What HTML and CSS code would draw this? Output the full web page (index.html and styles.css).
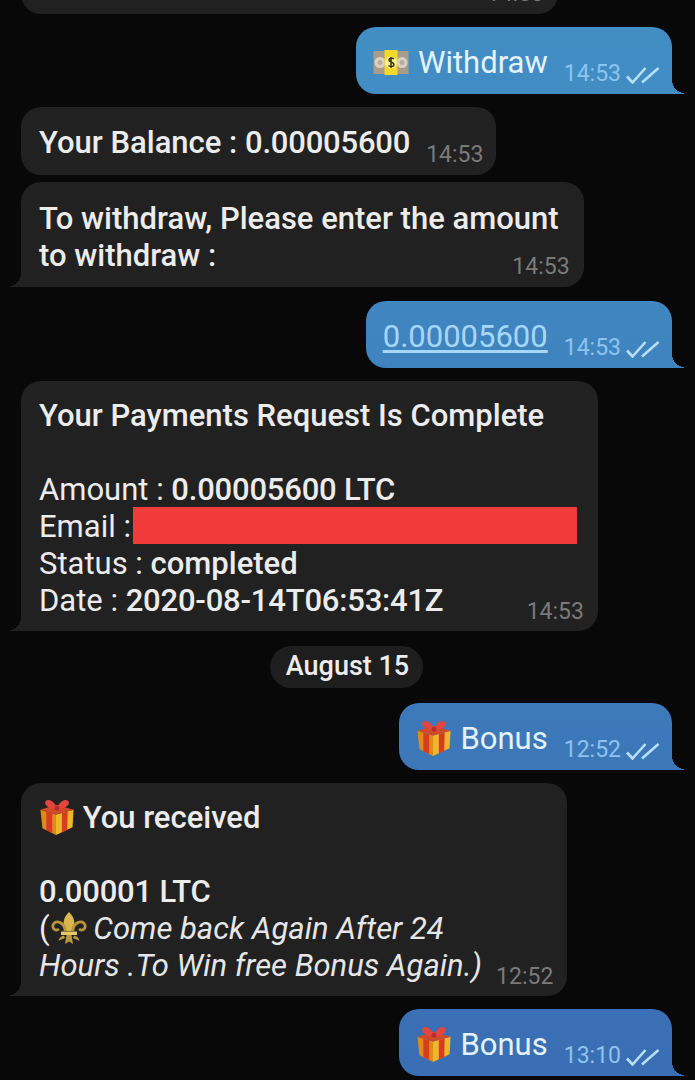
FILE: index.html

```html
<!DOCTYPE html>
<html lang="en">
<head>
  <meta charset="UTF-8">
  <meta name="viewport" content="width=device-width, initial-scale=1.0">
  <title>Chat</title>
  <link rel="stylesheet" href="styles.css">
</head>
<body>
  <svg class="defs" width="0" height="0">
    <defs>
      <symbol id="checks" viewBox="0 0 34 17">
        <path d="M1 9.500l5.500 6L19.500 1M16 15.500L32.500 1" fill="none" stroke="currentColor" stroke-width="2.600"/>
      </symbol>
      <symbol id="gift" viewBox="0 0 36 37">
        <path d="M1 11l16 5v21L3 30z" fill="#e2891c"/>
        <path d="M17 16l18-5-1 18-17 8z" fill="#f0b62a"/>
        <path d="M7 13l6 2v20l-6-3zM23 14.500l6-1.700-.5 19-5.500 2.700z" fill="#d63c20"/>
        <path d="M1 11L17 6l18 5-18 5z" fill="#cf4a28"/>
        <path d="M18 9C15 2 9-.5 6.500 2 4 5 8 10 18 11c10-1 14-6 11.500-9C27-.5 21 2 18 9z" fill="#e2453f"/>
        <circle cx="18" cy="9.500" r="2.500" fill="#b92c2c"/>
      </symbol>
      <symbol id="bill" viewBox="0 0 35 25">
        <rect y="1" width="35" height="23" fill="#a99d8a"/>
        <circle cx="6.500" cy="12.500" r="5.500" fill="#d9d1c3"/>
        <circle cx="6.500" cy="12.500" r="2.500" fill="#b8ad9b"/>
        <circle cx="28.500" cy="12.500" r="5.500" fill="#d9d1c3"/>
        <circle cx="28.500" cy="12.500" r="2.500" fill="#b8ad9b"/>
        <rect x="11" width="13" height="25" fill="#f2d92a"/>
        <circle cx="17.500" cy="12.500" r="6" fill="#f9ee90"/>
        <path d="M20.500 9c-2-1.500-5-1-5 1s5 2 5 4.500-3.500 2.500-5.500 1M17.500 7v11" fill="none" stroke="#3e3518" stroke-width="1.500"/>
      </symbol>
      <symbol id="fleur" viewBox="0 0 36 34">
        <path d="M18 1c-4.500 5-7 9-4 15l1.500 4h5l1.500-4c3-6 .5-10-4-15z" fill="#d8b650"/>
        <path d="M14 20c0-9-10-12-12-6-1 4 3 6.500 6 4M22 20c0-9 10-12 12-6 1 4-3 6.500-6 4" fill="none" stroke="#b8943a" stroke-width="2.800"/>
        <path d="M10 20.500h16V24H10z" fill="#e6c868"/>
        <path d="M15.500 24h5l1.500 9-4-2.500-4 2.500zM13 24.500c-3 .5-5 2.500-5.500 5.500 2-1.500 5-2 6.500-3zM23 24.500c3 .5 5 2.500 5.500 5.500-2-1.500-5-2-6.500-3z" fill="#bb973c"/>
      </symbol>
    </defs>
  </svg>

  <main class="chat">
    <div class="bubble incoming cut-off">
      <span class="meta"><span class="time">14:53</span></span>
    </div>

    <div class="bubble outgoing">
      <p class="text"><svg class="emoji bill"><use href="#bill"/></svg> Withdraw</p>
      <span class="meta"><span class="time">14:53</span><svg class="checks"><use href="#checks"/></svg></span>
    </div>

    <div class="bubble incoming no-tail">
      <p class="text"><b>Your Balance :</b> <b class="num">0.00005600</b></p>
      <span class="meta"><span class="time">14:53</span></span>
    </div>

    <div class="bubble incoming stacked withdraw-prompt">
      <p class="text"><b>To withdraw, Please enter the amount<br>to withdraw :</b></p>
      <span class="meta"><span class="time">14:53</span></span>
    </div>

    <div class="bubble outgoing after-prompt">
      <p class="text"><a class="link" href="#">0.00005600</a></p>
      <span class="meta"><span class="time">14:53</span><svg class="checks"><use href="#checks"/></svg></span>
    </div>

    <div class="bubble incoming stacked payment">
      <p class="text"><b>Your Payments Request Is Complete</b><br><br>Amount : <b class="num">0.00005600 LTC</b><br>Email :<span class="redacted"></span><br>Status : <b>completed</b><br>Date : <b class="num">2020-08-14T06:53:41Z</b></p>
      <span class="meta"><span class="time">14:53</span></span>
    </div>

    <div class="date-pill">August 15</div>

    <div class="bubble outgoing">
      <p class="text"><svg class="emoji"><use href="#gift"/></svg> Bonus</p>
      <span class="meta"><span class="time">12:52</span><svg class="checks"><use href="#checks"/></svg></span>
    </div>

    <div class="bubble incoming received">
      <p class="text"><svg class="emoji gift-tight"><use href="#gift"/></svg> <b>You received</b><br><br><b class="num">0.00001 LTC</b><br>(<svg class="emoji fleur"><use href="#fleur"/></svg> <i>Come back Again After 24<br>Hours .To Win free Bonus Again.)</i></p>
      <span class="meta"><span class="time">12:52</span></span>
    </div>

    <div class="bubble outgoing">
      <p class="text"><svg class="emoji"><use href="#gift"/></svg> Bonus</p>
      <span class="meta"><span class="time">13:10</span><svg class="checks"><use href="#checks"/></svg></span>
    </div>
  </main>
</body>
</html>
```

FILE: styles.css

```css
html, body {
  margin: 0;
  height: 100%;
  overflow: hidden;
}
body {
  background: #080808;
  color: #ececec;
  font-family: Roboto, "Liberation Sans", sans-serif;
  font-size: 31px;
  line-height: 37px;
}
.defs {
  display: block;
  height: 0;
}
.chat {
  display: flex;
  flex-direction: column;
  align-items: flex-start;
  gap: 13px;
  padding: 0 23px 0 21px;
}
.bubble {
  position: relative;
  display: flex;
  align-items: flex-end;
  white-space: nowrap;
  padding: 17px 14px 13px 18px;
  border-radius: 20px;
}
.text {
  margin: 0;
}
.text b {
  font-weight: 500;
}
.text .num {
  letter-spacing: -0.2px;
}
.text i {
  font-style: italic;
  color: #e6e6e6;
}
.meta {
  display: flex;
  align-items: center;
  gap: 5px;
  height: 28px;
  margin: 0 0 -7px 17px;
  font-size: 23px;
  line-height: 28px;
}

/* incoming messages */
.incoming {
  background: #212121;
  border-bottom-left-radius: 0;
}
.incoming .time {
  color: #7a7a7a;
}
.incoming::before {
  content: "";
  position: absolute;
  left: -11px;
  bottom: 0;
  width: 11px;
  height: 14px;
  background: radial-gradient(ellipse 11px 13px at 0 0, transparent 98%, #212121 100%);
}
.no-tail {
  border-bottom-left-radius: 20px;
  padding-right: 13px;
  padding-bottom: 14px;
}
.no-tail .meta {
  margin: 0 0 -8px 16px;
}
.no-tail::before {
  display: none;
}
.stacked {
  flex-direction: column;
}
.stacked .meta {
  align-self: flex-end;
  margin: -21px 0 -7px;
}
.withdraw-prompt {
  margin-top: -6px;
  padding-top: 18px;
}
.withdraw-prompt .text {
  padding-right: 11px;
}
.payment {
  padding-top: 16px;
  padding-bottom: 12px;
}
.payment .text {
  padding-right: 7px;
}
.redacted {
  display: inline-block;
  width: 444px;
  height: 37px;
  margin: -1px 0 0 2px;
  vertical-align: top;
  background: #f13a3a;
}
.received {
  padding-top: 16px;
  padding-bottom: 12px;
}
.received .meta {
  margin: 0 0 -7px 14px;
}
.cut-off {
  width: 537px;
  height: 60px;
  box-sizing: border-box;
  margin-top: -46px;
  justify-content: flex-end;
  border-bottom-left-radius: 20px;
}
.cut-off::before {
  display: none;
}

/* outgoing messages share one gradient down the whole screen */
.outgoing {
  align-self: flex-end;
  color: #e3f2fb;
  background: linear-gradient(#428fc4, #3a6eb4) fixed;
  border-bottom-right-radius: 0;
  padding-left: 17px;
  padding-right: 12px;
}
.after-prompt {
  margin-top: 1px;
}
.outgoing .meta {
  color: #8cc4ee;
  margin-left: 16px;
}
.outgoing::after {
  content: "";
  position: absolute;
  right: -12px;
  bottom: 0;
  width: 12px;
  height: 14px;
  background: linear-gradient(#428fc4, #3a6eb4) fixed;
  -webkit-mask-image: radial-gradient(ellipse 12px 13px at 100% 0, transparent 98%, #000 100%);
  mask-image: radial-gradient(ellipse 12px 13px at 100% 0, transparent 98%, #000 100%);
}
.link {
  color: #a5d8f7;
  text-decoration: underline;
  text-underline-offset: 3px;
}
.checks {
  width: 34px;
  height: 17px;
  margin-top: 2px;
  color: #b6dff8;
}
.emoji {
  width: 36px;
  height: 36px;
  margin-right: 1px;
  vertical-align: -7px;
}
.gift-tight {
  margin-right: 0;
}
.bill {
  height: 25px;
  vertical-align: -2px;
}
.fleur {
  margin: 0 -1px 0 1px;
}

.date-pill {
  align-self: center;
  margin: 2px 0;
  padding: 2px 14px 3px 16px;
  border-radius: 21px;
  background: #1e1e1e;
  color: #ededed;
  font-size: 27px;
  font-weight: 500;
}
```
